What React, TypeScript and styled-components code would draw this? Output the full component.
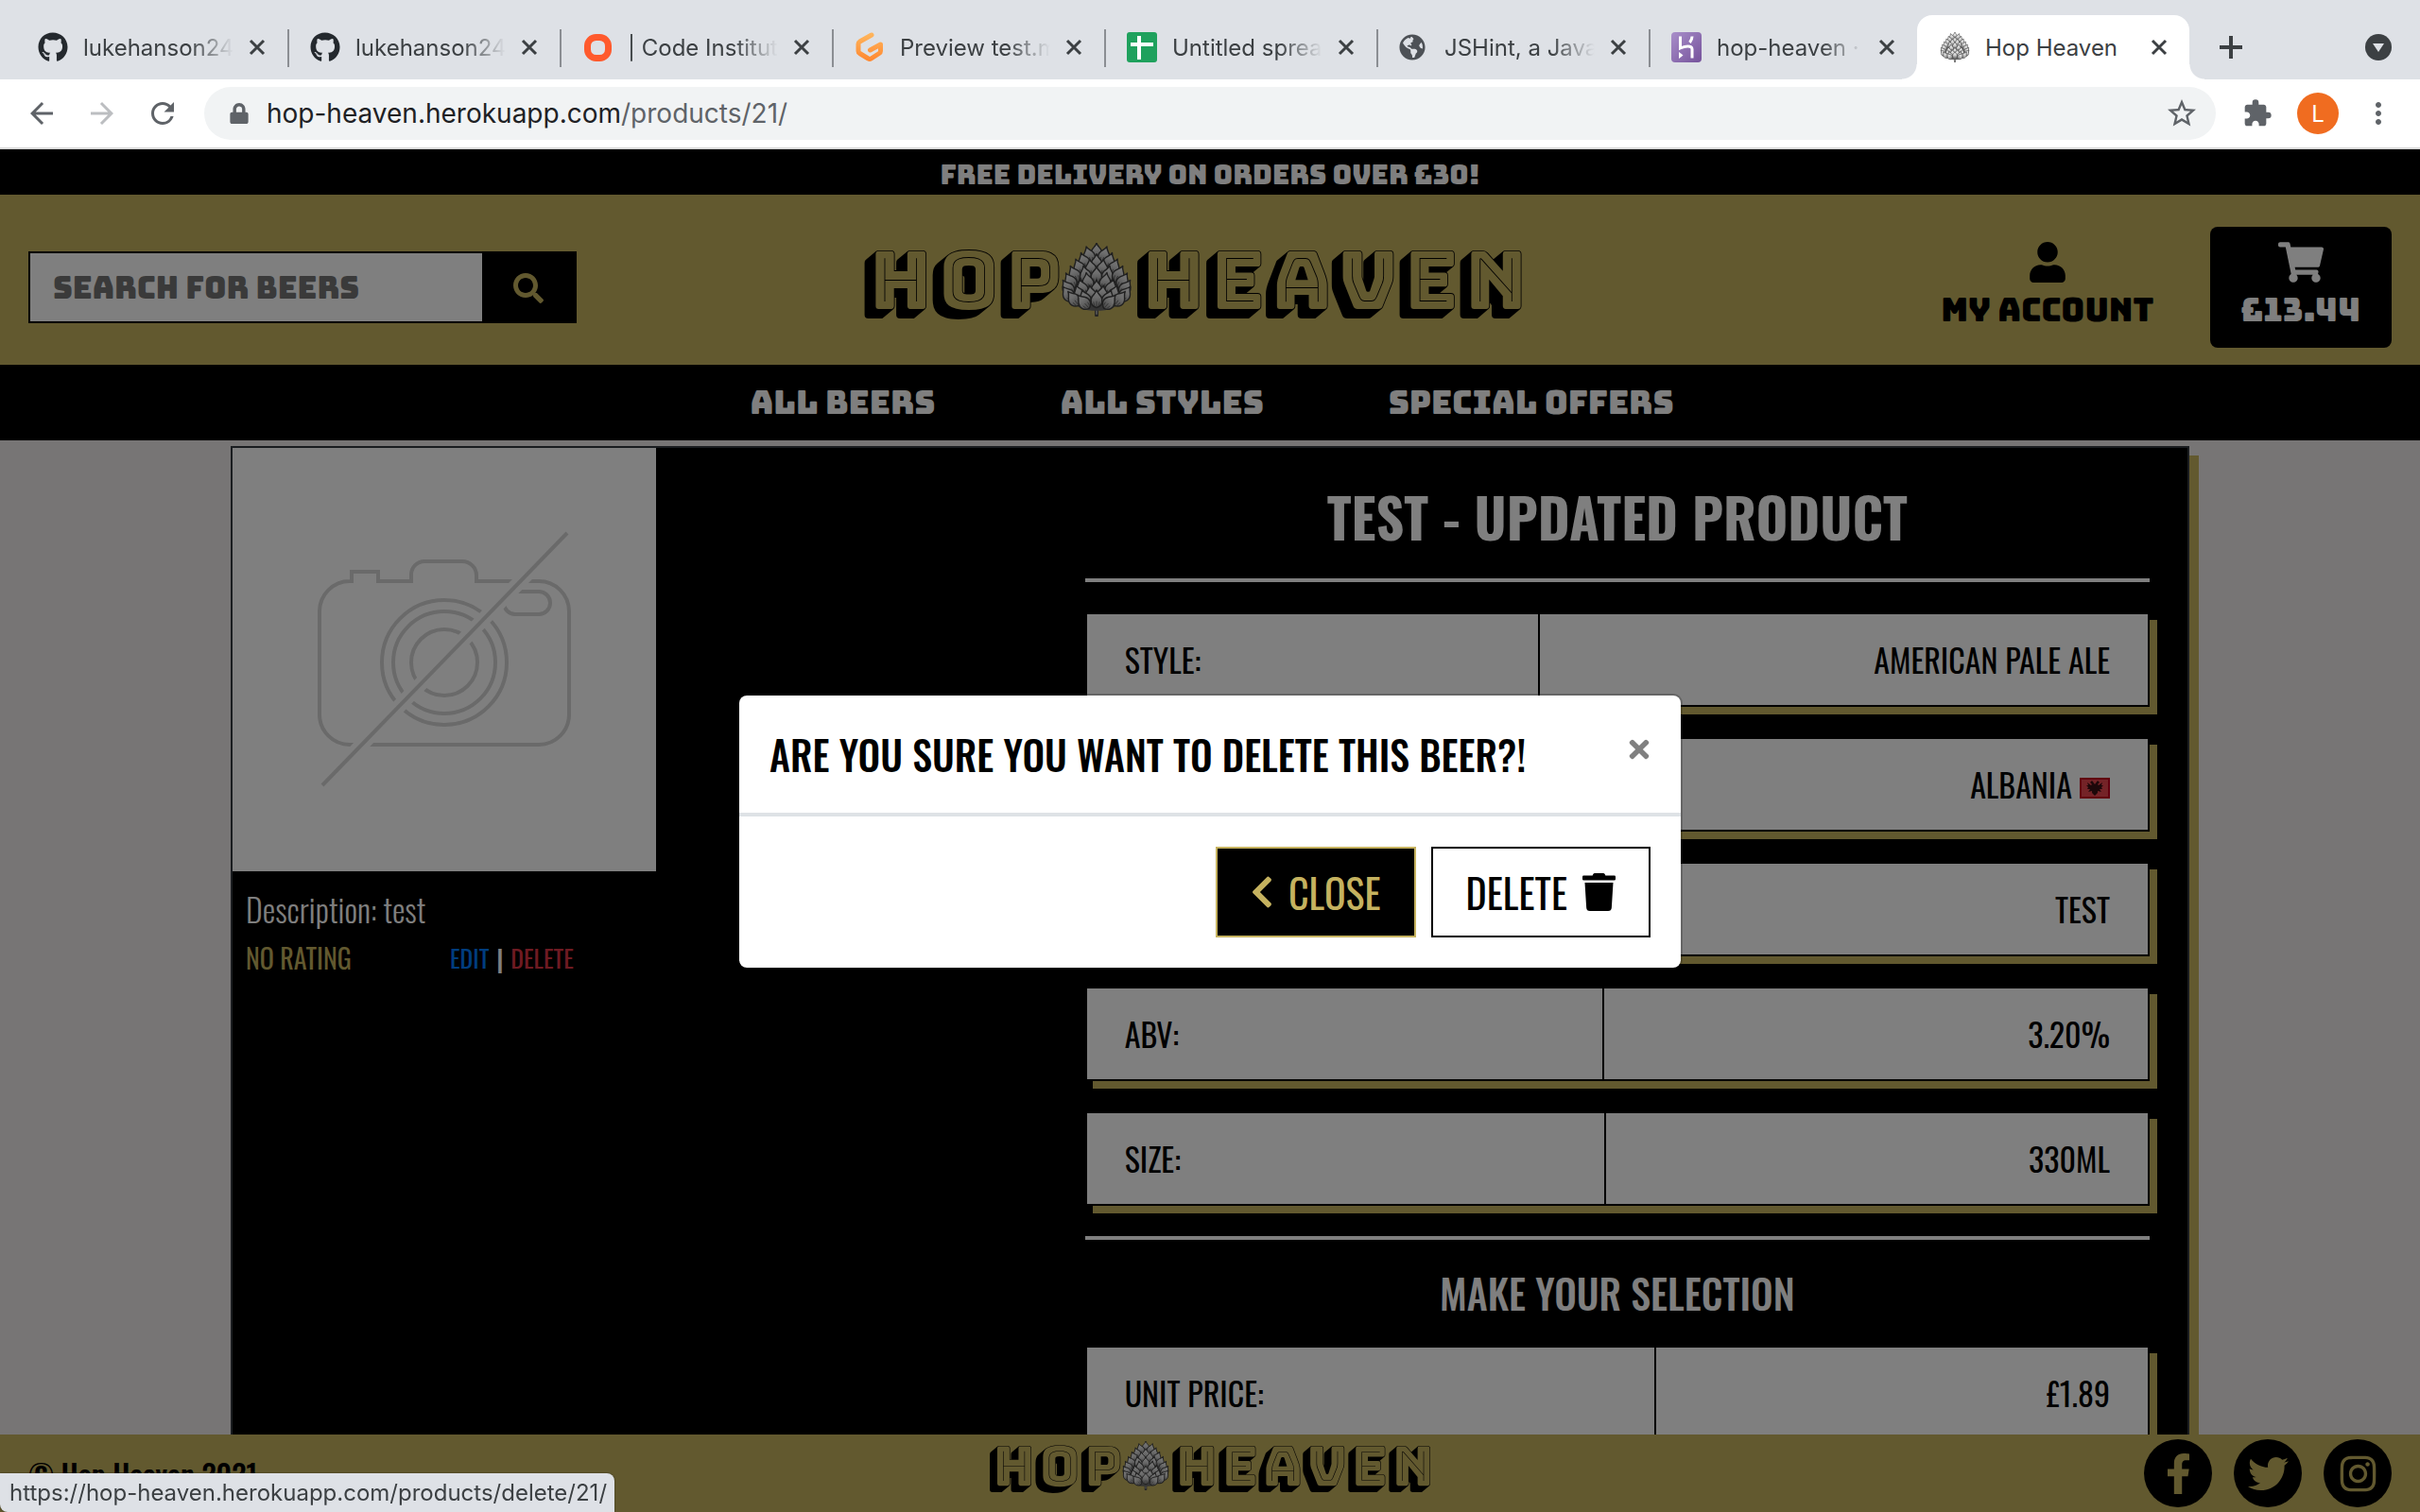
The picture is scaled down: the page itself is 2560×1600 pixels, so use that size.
import React from 'react';
import styled, { createGlobalStyle, css } from 'styled-components';
import {
  FaChevronLeft,
  FaFacebookF,
  FaGithub,
  FaGlobeAmericas,
  FaInstagram,
  FaLock,
  FaSearch,
  FaShoppingCart,
  FaTimes,
  FaTrash,
  FaTwitter,
  FaUser,
} from 'react-icons/fa';
import {
  MdArrowBack,
  MdArrowForward,
  MdExtension,
  MdMoreVert,
  MdRefresh,
  MdStarBorder,
} from 'react-icons/md';

const gold = '#c5b25f';
const ink = '#3c4043';
const display = "'Bungee', 'Inter', sans-serif";
const condensed = "'Oswald', 'Roboto Condensed', sans-serif";
const system = "'Inter', 'Roboto', sans-serif";

const GlobalStyle = createGlobalStyle`
  *, *::before, *::after { box-sizing: border-box; }
  body { margin: 0; font-family: ${condensed}; color: #000; }
  h1, h2, p { margin: 0; }
  a { color: inherit; text-decoration: none; }
  button { font: inherit; cursor: pointer; }
`;

const Window = styled.div`
  display: flex;
  flex-direction: column;
  height: 100vh;
  overflow: hidden;
`;

/* ---------- browser frame ---------- */

const TabStrip = styled.div`
  display: flex;
  align-items: flex-end;
  height: 84px;
  padding-left: 16px;
  background: #dee1e6;
  font: 400 24px ${system};
  color: ${ink};
`;

const TabItem = styled.div<{ $active?: boolean; $last?: boolean }>`
  position: relative;
  display: flex;
  align-items: center;
  flex: 0 1 ${(p) => (p.$last ? 284 : 288)}px;
  min-width: 0;
  height: 68px;
  padding: 0 16px 0 24px;
  ${(p) =>
    p.$active &&
    css`
      background: #fff;
      border-radius: 16px 16px 0 0;
      &::before,
      &::after {
        content: '';
        position: absolute;
        bottom: 0;
        width: 16px;
        height: 16px;
      }
      &::before {
        right: 100%;
        background: radial-gradient(circle at 0 0, transparent 15px, #fff 16px);
      }
      &::after {
        left: 100%;
        background: radial-gradient(circle at 100% 0, transparent 15px, #fff 16px);
      }
    `}
  ${(p) =>
    !p.$active &&
    !p.$last &&
    css`
      &::after {
        content: '';
        position: absolute;
        right: -2px;
        top: 15px;
        width: 2px;
        height: 40px;
        background: #8b8e93;
      }
    `}
`;

const Favicon = styled.span`
  display: flex;
  flex: none;
  width: 32px;
  margin-right: 16px;
  font-size: 32px;
  color: #24292e;
`;

const TabTitle = styled.span`
  flex: 1;
  min-width: 0;
  margin-right: 6px;
  overflow: hidden;
  white-space: nowrap;
  mask-image: linear-gradient(90deg, #000 70%, transparent 98%);
`;

const PlainTitle = styled(TabTitle)`
  mask-image: none;
`;

const IconButton = styled.button<{ $size?: number; $tone?: string }>`
  display: flex;
  flex: none;
  align-items: center;
  justify-content: center;
  width: ${(p) => p.$size ?? 64}px;
  height: ${(p) => p.$size ?? 64}px;
  padding: 0;
  border: 0;
  background: none;
  color: ${(p) => p.$tone ?? '#5f6368'};
  font-size: 36px;
`;

const NewTab = styled(IconButton)`
  margin-left: 16px;
  height: 68px;
`;

const TabSearch = styled(IconButton)`
  margin-left: auto;
  margin-right: 16px;
  height: 68px;
`;

const Toolbar = styled.div`
  display: flex;
  align-items: center;
  height: 74px;
  padding: 0 12px;
  border-bottom: 2px solid #d9d9d9;
  background: #fff;
`;

const Omnibox = styled.div`
  display: flex;
  align-items: center;
  flex: 1;
  height: 56px;
  margin: 0 12px;
  padding: 0 4px 0 26px;
  border-radius: 28px;
  background: #f1f3f4;
  color: #5f6368;
  font: 400 28px ${system};
  & > svg {
    margin-right: 18px;
  }
`;

const Address = styled.span`
  flex: 1;
  b {
    font-weight: 400;
    color: #202124;
  }
`;

const Avatar = styled.button`
  width: 44px;
  height: 44px;
  margin: 0 10px;
  padding: 0;
  border: 0;
  border-radius: 50%;
  background: #f06c20;
  color: #fff;
  font: 400 24px ${system};
`;

/* ---------- site ---------- */

const Site = styled.div`
  position: relative;
  display: flex;
  flex: 1;
  flex-direction: column;
  min-height: 0;
  background: #eeeaeb;
`;

const Banner = styled.p`
  flex: none;
  height: 48px;
  padding-top: 6px;
  background: #000;
  color: #fff;
  font: 400 28px/42px ${display};
  text-align: center;
`;

const Header = styled.header`
  display: grid;
  flex: none;
  grid-template-columns: 1fr auto 1fr;
  align-items: center;
  padding: 34px 30px 18px;
  background: ${gold};
`;

const SearchForm = styled.form`
  display: flex;
  width: 580px;
  height: 76px;
  border: 2px solid #000;
  input {
    flex: 1;
    min-width: 0;
    padding: 0 24px;
    border: 0;
    border-radius: 0;
    outline: 0;
    background: #fff;
    font: 400 32px ${display};
  }
  input::placeholder {
    color: #757575;
    opacity: 1;
  }
  button {
    display: flex;
    align-items: center;
    justify-content: center;
    width: 98px;
    padding: 2px 0 0;
    border: 0;
    background: #000;
    color: ${gold};
    font-size: 32px;
  }
`;

const LogoLink = styled.a<{ $size: number }>`
  display: flex;
  align-items: center;
  padding-bottom: 16px;
  color: #000;
  font: 400 ${(p) => p.$size}px/1 'Bungee Shade', ${display};
  svg {
    width: ${(p) => Math.round(p.$size * 0.92)}px;
    height: ${(p) => Math.round(p.$size * 0.92)}px;
  }
`;

const HeaderLogo = styled(LogoLink)`
  margin-right: 36px;
`;

const Actions = styled.div`
  display: flex;
  justify-content: flex-end;
  gap: 26px;
`;

const Action = styled.a<{ $solid?: boolean; $icon: number }>`
  display: flex;
  flex-direction: column;
  align-items: center;
  gap: 11px;
  padding: 16px 33px 22px;
  border-radius: 8px;
  background: ${(p) => (p.$solid ? '#000' : 'transparent')};
  color: ${(p) => (p.$solid ? '#fff' : '#000')};
  font: 400 34px/36px ${display};
  svg {
    width: ${(p) => p.$icon}px;
    height: 43px;
  }
`;

const Nav = styled.nav`
  display: flex;
  flex: none;
  justify-content: center;
  gap: 132px;
  padding-left: 4px;
  background: #000;
  color: #fff;
  font: 400 34px/80px ${display};
`;

const Main = styled.main`
  flex: 1;
  min-height: 0;
  overflow: hidden;
  padding: 6px 30px 0;
`;

const Card = styled.article`
  display: grid;
  grid-template-columns: 5fr 7fr;
  max-width: 2072px;
  margin: 0 auto;
  border: 2px solid #343a40;
  background: #000;
  color: #fff;
  box-shadow: 10px 10px 0 ${gold};
`;

const Photo = styled.figure`
  width: 448px;
  margin: 0;
  background: #fff;
  svg {
    display: block;
    width: 100%;
  }
`;

const Details = styled.div`
  display: flex;
  flex-direction: column;
  gap: 8px;
  padding: 16px 14px;
`;

const Description = styled.p`
  font-size: 34px;
  font-weight: 300;
  line-height: 48px;
`;

const Meta = styled.div`
  display: grid;
  grid-template-columns: 216px auto;
  font-size: 26px;
  line-height: 40px;
`;

const Rating = styled.span`
  color: ${gold};
  font-size: 28px;
`;

const Manage = styled.span`
  display: flex;
  gap: 8px;
`;

const EditLink = styled.a`
  color: #007bff;
`;

const DeleteLink = styled.a`
  color: #dc3545;
`;

const Facts = styled.section`
  display: flex;
  flex-direction: column;
  gap: 32px;
  padding: 38px 40px 60px;
`;

const Title = styled.h1`
  font-size: 58px;
  font-weight: 700;
  line-height: 68px;
  text-align: center;
`;

const Subtitle = styled.h2`
  font-size: 42px;
  font-weight: 500;
  line-height: 48px;
  text-align: center;
`;

const Rule = styled.hr`
  width: 100%;
  height: 4px;
  margin: 0;
  border: 0;
  background: #fff;
`;

const FactTable = styled.table<{ $split: string }>`
  width: 100%;
  height: 100px;
  border: 2px solid #000;
  border-collapse: collapse;
  background: #fff;
  box-shadow: 8px 8px 0 ${gold};
  color: #000;
  font-size: 34px;
  th,
  td {
    padding: 0 40px;
    font-weight: 400;
    line-height: 48px;
  }
  th {
    width: ${(p) => p.$split};
    border-right: 2px solid #000;
    text-align: left;
  }
  td {
    text-align: right;
  }
  td svg {
    margin-left: 8px;
  }
`;

const Footer = styled.footer`
  display: grid;
  flex: none;
  grid-template-columns: 1fr auto 1fr;
  align-items: center;
  height: 82px;
  padding: 0 30px;
  background: ${gold};
`;

const Copyright = styled.p`
  font-size: 31px;
  font-weight: 500;
`;

const Social = styled.div`
  display: flex;
  justify-content: flex-end;
  gap: 23px;
  a {
    display: flex;
    align-items: center;
    justify-content: center;
    width: 72px;
    height: 72px;
    border-radius: 50%;
    background: #000;
    color: ${gold};
    font-size: 43px;
  }
`;

const Backdrop = styled.div`
  position: absolute;
  inset: 0;
  display: flex;
  align-items: center;
  justify-content: center;
  padding-top: 2px;
  background: rgba(0, 0, 0, 0.5);
`;

const Dialog = styled.section`
  width: 1000px;
  max-width: 100%;
  border: 2px solid rgba(0, 0, 0, 0.2);
  border-radius: 10px;
  background: #fff;
  background-clip: padding-box;
`;

const DialogHeader = styled.div`
  display: flex;
  justify-content: space-between;
  padding: 32px;
  border-bottom: 4px solid #dee2e6;
  h2 {
    font-size: 42px;
    font-weight: 500;
    line-height: 60px;
  }
`;

const Dismiss = styled.button`
  display: flex;
  align-items: center;
  height: 50px;
  padding: 0;
  border: 0;
  background: none;
  color: #808080;
  svg {
    width: 24px;
    height: 30px;
  }
`;

const DialogFooter = styled.div`
  display: flex;
  justify-content: flex-end;
  gap: 16px;
  padding: 32px;
`;

const actionBox = css`
  display: flex;
  align-items: center;
  gap: 16px;
  height: 96px;
  padding: 0 35px;
  border-radius: 0;
  font: 400 42px ${condensed};
`;

const CloseButton = styled.button`
  ${actionBox}
  border: 2px solid ${gold};
  background: #000;
  color: ${gold};
  svg {
    width: 24px;
    height: 40px;
  }
`;

const ConfirmLink = styled.a`
  ${actionBox}
  border: 2px solid #000;
  background: #fff;
  svg {
    width: 35px;
    height: 40px;
  }
`;

const StatusBubble = styled.div`
  position: fixed;
  left: 0;
  bottom: 0;
  height: 41px;
  padding: 0 8px 0 10px;
  border-radius: 0 8px 0 8px;
  background: #dee1e6;
  color: ${ink};
  font: 400 24px/41px ${system};
  box-shadow: 0 0 2px rgba(0, 0, 0, 0.5);
`;

/* ---------- drawings ---------- */

/* base line, half width and number of scales of each row, from the tip down */
const coneRows: [number, number, number][] = [
  [24, 0, 1],
  [31, 7, 2],
  [39, 13, 3],
  [47, 19, 4],
  [56, 25, 5],
  [65, 30, 4],
  [74, 33, 5],
  [82, 32, 6],
  [88, 24, 5],
  [92, 10, 2],
];

const HopCone = () => (
  <svg viewBox="0 0 100 100" aria-hidden="true">
    <defs>
      <linearGradient id="scale" x1="0" y1="1" x2="0" y2="0">
        <stop offset="0" stopColor="#8c8c8c" />
        <stop offset="0.6" stopColor="#dcdcdc" />
        <stop offset="1" stopColor="#f2f2f2" />
      </linearGradient>
    </defs>
    <path d="M50 86 V98" stroke="#4a4a4a" strokeWidth="5" strokeLinecap="round" />
    <path d="M50 86 V97" stroke="#b4b4b4" strokeWidth="2" />
    <path d="M50 8 C68 24 84 52 84 72 C82 88 66 92 50 92 C34 92 18 88 16 72 C16 52 32 24 50 8Z" fill="#6a6a6a" />
    {coneRows.map(([y, half, count], row) =>
      Array.from({ length: count }, (_, i) => {
        const t = count === 1 ? 0 : (i / (count - 1)) * 2 - 1;
        return (
          <g
            key={`${row}-${i}`}
            transform={`translate(${50 + t * half} ${y - Math.abs(t) * 3}) rotate(${t * (14 + row * 3)})`}
          >
            <path
              d="M0 0 C-7 -2 -10 -9 -6 -15 C-4 -18 -1 -20 0 -24 C1 -20 4 -18 6 -15 C10 -9 7 -2 0 0Z"
              fill="url(#scale)"
              stroke="#404040"
              strokeWidth="1.8"
              strokeLinejoin="round"
            />
            <path d="M0 -1 V-9 M-3 -2 L-4 -8 M3 -2 L4 -8" stroke="#5c5c5c" strokeWidth="1" fill="none" />
          </g>
        );
      }),
    )}
  </svg>
);

const NoPhoto = () => (
  <svg viewBox="0 0 448 448" role="img" aria-label="No image available">
    <g fill="none" stroke="#d4d4d4" strokeWidth="4">
      <path d="M92 173 A32 32 0 0 1 124 141 H126 V131 H154 V141 H189 V134 A14 14 0 0 1 203 120 H243 A15 15 0 0 1 258 135 V141 H324 A32 32 0 0 1 356 173 V282 A32 32 0 0 1 324 314 H124 A32 32 0 0 1 92 282 Z" />
      <circle cx="224" cy="227" r="66" />
      <circle cx="224" cy="227" r="54" />
      <circle cx="224" cy="227" r="35" />
      <rect x="287" y="152" width="49" height="24" rx="12" />
      <path d="M95 357 L354 90" stroke="#fff" strokeWidth="15" />
      <path d="M95 357 L354 90" />
    </g>
  </svg>
);

const AlbaniaFlag = () => (
  <svg width="32" height="22" viewBox="0 0 32 22" role="img" aria-label="Flag of Albania">
    <rect width="32" height="22" fill="#c2001f" />
    <rect x="2" y="2" width="28" height="18" fill="#e8474f" />
    <path
      d="M16 7 L13 3 L11 5 L13 7 L12 8 L8 5 L9 8 L7 8 L9 10 L8 12 L11 12 L9 15 L13 14 L13 16 L16 19 L19 16 L19 14 L23 15 L21 12 L24 12 L23 10 L25 8 L23 8 L24 5 L20 8 L19 7 L21 5 L19 3Z"
      fill="#3a1015"
    />
  </svg>
);

const CodeInstituteIcon = () => (
  <svg width="32" height="32" viewBox="0 0 32 32" aria-hidden="true">
    <rect x="5.500" y="5.500" width="22" height="22" rx="9" fill="none" stroke="#ff5a2d" strokeWidth="7" />
  </svg>
);

const GitpodIcon = () => (
  <svg width="32" height="32" viewBox="0 0 32 32" aria-hidden="true">
    <defs>
      <linearGradient id="gitpod" x1="0" y1="0" x2="0" y2="1">
        <stop offset="0" stopColor="#ffb45b" />
        <stop offset="1" stopColor="#ff8a33" />
      </linearGradient>
    </defs>
    <path
      d="M18 3 L5.500 10 Q4 11 4 12.500 V20 Q4 21.500 5.500 22.500 L14.500 28 Q16 29 17.500 28 L26 22.500 Q27.500 21.500 27.500 20 V13 L16.500 19"
      fill="none"
      stroke="url(#gitpod)"
      strokeWidth="5"
      strokeLinecap="round"
      strokeLinejoin="round"
    />
  </svg>
);

const SheetsIcon = () => (
  <svg width="32" height="32" viewBox="0 0 32 32" aria-hidden="true">
    <rect width="32" height="32" rx="3" fill="#1fa15d" />
    <path d="M13 4 V29 M4 13 H28" stroke="#fff" strokeWidth="4" />
  </svg>
);

const HerokuIcon = () => (
  <svg width="32" height="32" viewBox="0 0 32 32" aria-hidden="true">
    <defs>
      <linearGradient id="heroku" x1="0" y1="0" x2="1" y2="1">
        <stop offset="0" stopColor="#a98fca" />
        <stop offset="1" stopColor="#75529b" />
      </linearGradient>
    </defs>
    <rect width="32" height="32" rx="4" fill="url(#heroku)" />
    <path d="M9.500 4.500 V17 C14 15 22 13.500 22 18 V27.500 M22 4.500 C22 7 21 9 19.500 11" fill="none" stroke="#fff" strokeWidth="3" />
    <path d="M8 21 L12.500 24.500 L8 28Z" fill="#fff" />
  </svg>
);

const CloseGlyph = () => (
  <svg width="18" height="18" viewBox="0 0 18 18" aria-hidden="true">
    <path d="M2 2 L16 16 M16 2 L2 16" stroke="#3c4043" strokeWidth="3" />
  </svg>
);

const PlusGlyph = () => (
  <svg width="24" height="24" viewBox="0 0 24 24" aria-hidden="true">
    <path d="M12 0 V24 M0 12 H24" stroke="#3c4043" strokeWidth="4" />
  </svg>
);

const TabSearchGlyph = () => (
  <svg width="28" height="28" viewBox="0 0 28 28" aria-hidden="true">
    <circle cx="14" cy="14" r="14" fill="#3c4043" />
    <path d="M8 10 H20 L14 19Z" fill="#dee1e6" />
  </svg>
);

/* ---------- content ---------- */

const tabs = [
  { icon: <FaGithub />, title: 'lukehanson242' },
  { icon: <FaGithub />, title: 'lukehanson242' },
  { icon: <CodeInstituteIcon />, title: '| Code Institute' },
  { icon: <GitpodIcon />, title: 'Preview test.md' },
  { icon: <SheetsIcon />, title: 'Untitled spreads' },
  { icon: <FaGlobeAmericas size={28} color="#4d5156" />, title: 'JSHint, a JavaS' },
  { icon: <HerokuIcon />, title: 'hop-heaven · A' },
];

type Fact = { label: string; value: React.ReactNode; split: string };

const facts: Fact[] = [
  { label: 'STYLE:', value: 'AMERICAN PALE ALE', split: '42.6%' },
  { label: 'COUNTRY:', value: <>ALBANIA<AlbaniaFlag /></>, split: '46%' },
  { label: 'BREWERY:', value: 'TEST', split: '46%' },
  { label: 'ABV:', value: '3.20%', split: '48.7%' },
  { label: 'SIZE:', value: '330ML', split: '48.9%' },
];

const FactRow = ({ label, value, split }: Fact) => (
  <FactTable $split={split}>
    <tbody>
      <tr>
        <th scope="row">{label}</th>
        <td>{value}</td>
      </tr>
    </tbody>
  </FactTable>
);

export default function App() {
  return (
    <Window>
      <GlobalStyle />
      <TabStrip>
        {tabs.map((tab, i) => (
          <TabItem key={i} $last={i === tabs.length - 1}>
            <Favicon>{tab.icon}</Favicon>
            <TabTitle>{tab.title}</TabTitle>
            <IconButton $size={32} aria-label="Close tab"><CloseGlyph /></IconButton>
          </TabItem>
        ))}
        <TabItem $active>
          <Favicon><HopCone /></Favicon>
          <PlainTitle>Hop Heaven</PlainTitle>
          <IconButton $size={32} aria-label="Close tab"><CloseGlyph /></IconButton>
        </TabItem>
        <NewTab $size={56} aria-label="New tab"><PlusGlyph /></NewTab>
        <TabSearch $size={56} aria-label="Search tabs"><TabSearchGlyph /></TabSearch>
      </TabStrip>
      <Toolbar>
        <IconButton aria-label="Back"><MdArrowBack /></IconButton>
        <IconButton $tone="#bcbec1" aria-label="Forward"><MdArrowForward /></IconButton>
        <IconButton aria-label="Reload"><MdRefresh /></IconButton>
        <Omnibox>
          <FaLock size={22} />
          <Address><b>hop-heaven.herokuapp.com</b>/products/21/</Address>
          <IconButton aria-label="Bookmark this page"><MdStarBorder /></IconButton>
        </Omnibox>
        <IconButton aria-label="Extensions"><MdExtension size={32} /></IconButton>
        <Avatar aria-label="Profile">L</Avatar>
        <IconButton aria-label="Menu"><MdMoreVert /></IconButton>
      </Toolbar>

      <Site>
        <Banner>FREE DELIVERY ON ORDERS OVER £30!</Banner>
        <Header>
          <SearchForm role="search" onSubmit={(e) => e.preventDefault()}>
            <input type="text" aria-label="Search for beers" placeholder="SEARCH FOR BEERS" />
            <button type="submit" aria-label="Search"><FaSearch /></button>
          </SearchForm>
          <HeaderLogo href="#home" $size={85}>HOP<HopCone />HEAVEN</HeaderLogo>
          <Actions>
            <Action href="#account" $icon={38}><FaUser />MY ACCOUNT</Action>
            <Action href="#bag" $icon={48} $solid><FaShoppingCart />£13.44</Action>
          </Actions>
        </Header>
        <Nav>
          <a href="#beers">ALL BEERS</a>
          <a href="#styles">ALL STYLES</a>
          <a href="#offers">SPECIAL OFFERS</a>
        </Nav>
        <Main>
          <Card>
            <div>
              <Photo><NoPhoto /></Photo>
              <Details>
                <Description>Description: test</Description>
                <Meta>
                  <Rating>NO RATING</Rating>
                  <Manage>
                    <EditLink href="#edit">EDIT</EditLink>
                    <b>|</b>
                    <DeleteLink href="#delete">DELETE</DeleteLink>
                  </Manage>
                </Meta>
              </Details>
            </div>
            <Facts>
              <Title>TEST - UPDATED PRODUCT</Title>
              <Rule />
              {facts.map((fact) => <FactRow key={fact.label} {...fact} />)}
              <Rule />
              <Subtitle>MAKE YOUR SELECTION</Subtitle>
              <FactRow label="UNIT PRICE:" value="£1.89" split="53.6%" />
            </Facts>
          </Card>
        </Main>
        <Footer>
          <Copyright>© Hop Heaven 2021</Copyright>
          <LogoLink href="#home" $size={57}>HOP<HopCone />HEAVEN</LogoLink>
          <Social>
            <a href="#facebook" aria-label="Facebook"><FaFacebookF /></a>
            <a href="#twitter" aria-label="Twitter"><FaTwitter /></a>
            <a href="#instagram" aria-label="Instagram"><FaInstagram /></a>
          </Social>
        </Footer>
        <Backdrop>
          <Dialog role="dialog" aria-modal="true" aria-labelledby="dialog-title">
            <DialogHeader>
              <h2 id="dialog-title">ARE YOU SURE YOU WANT TO DELETE THIS BEER?!</h2>
              <Dismiss aria-label="Close"><FaTimes /></Dismiss>
            </DialogHeader>
            <DialogFooter>
              <CloseButton><FaChevronLeft />CLOSE</CloseButton>
              <ConfirmLink href="#confirm">DELETE<FaTrash /></ConfirmLink>
            </DialogFooter>
          </Dialog>
        </Backdrop>
      </Site>
      <StatusBubble>https://hop-heaven.herokuapp.com/products/delete/21/</StatusBubble>
    </Window>
  );
}
